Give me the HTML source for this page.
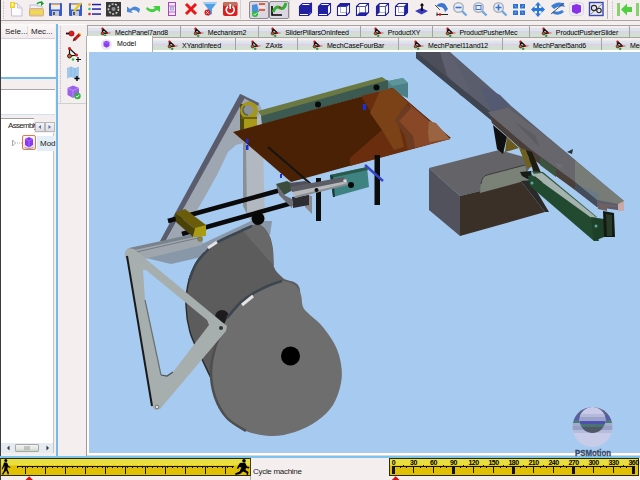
<!DOCTYPE html>
<html><head><meta charset="utf-8">
<style>
*{margin:0;padding:0;box-sizing:border-box}
html,body{width:640px;height:480px;overflow:hidden;background:#f5eeee;font-family:"Liberation Sans",sans-serif;font-size:7px;color:#000}
.a{position:absolute}
.tab{position:absolute;height:12px;border:1px solid #a4a4a4;border-bottom:none;background:linear-gradient(#f6eeee 0,#f6eeee 20%,#dce4ec 22%,#dce4ec 45%,#dcd4e6 47%,#dcd4e6 66%,#d2e0d2 68%,#d2e0d2 100%);white-space:nowrap;overflow:hidden}
.tab span{position:absolute;top:2px;font-size:7px;color:#111}
.tab i{position:absolute;top:1px;width:11px;height:11px}
.tc{position:absolute;left:0;right:0;top:0;bottom:0;display:flex;align-items:center;justify-content:center}
.tc span{position:relative;top:1px;margin-left:3px;font-size:7px;color:#000;letter-spacing:-0.1px}
.mi{flex:none;position:relative;top:1px}
.lbl{position:absolute;white-space:nowrap}
</style></head><body>


<!-- top toolbar -->
<div class="a" style="left:0;top:0;width:640px;height:21px;background:#f5eeee;border-bottom:1px solid #a9a5a5"></div>
<div class="a" style="left:0;top:0;width:1px;height:480px;background:#3c3c3c"></div>
<!-- left panel -->
<div class="a" style="left:1px;top:24px;width:54px;height:14px;background:linear-gradient(#fbf8f8,#f3ecec)"></div>
<div class="a" style="left:1px;top:38px;width:54px;height:1px;background:#d8d0e0"></div>
<div class="a" style="left:27px;top:26px;width:1px;height:11px;background:#e0dbe6"></div>
<div class="lbl" style="left:5px;top:27px;font-size:8px;color:#222">Sele...</div>
<div class="lbl" style="left:31px;top:27px;font-size:8px;color:#222">Mec...</div>
<div class="a" style="left:1px;top:39px;width:54px;height:38px;background:#fff"></div>
<div class="a" style="left:1px;top:77px;width:55px;height:2px;background:#74bbe9"></div>
<div class="a" style="left:1px;top:89px;width:54px;height:1px;background:#a8a8a8"></div>
<div class="a" style="left:1px;top:90px;width:54px;height:24px;background:#fff"></div>
<div class="a" style="left:1px;top:114px;width:54px;height:1px;background:#cfe0ee"></div>
<!-- assembly tab area -->
<div class="a" style="left:1px;top:118px;width:33px;height:16px;background:#fff;border-top:1px solid #a0a0a0"></div>
<div class="lbl" style="left:8px;top:121px;font-size:8px;color:#222;letter-spacing:-0.7px">Assembly</div>
<div class="a" style="left:35px;top:122px;width:10px;height:10px;border:1px solid #b8b8b8;background:linear-gradient(#f4f4f6,#dcdce4)"></div>
<div class="a" style="left:45px;top:122px;width:10px;height:10px;border:1px solid #b8b8b8;background:linear-gradient(#f4f4f6,#dcdce4)"></div>
<div class="a" style="left:1px;top:133px;width:53px;height:320px;background:#fff;border-right:1px solid #c4c4c4"></div>
<div class="a" style="left:1px;top:443px;width:52px;height:10px;background:#e4ecf2"></div>
<div class="a" style="left:15px;top:444px;width:24px;height:8px;border:1px solid #a8a8a8;border-radius:1px;background:linear-gradient(#f2f2f2,#e0e8e0 60%,#c8d4c8)"></div>
<svg class="a" style="left:0;top:440px" width="56" height="15" viewBox="0 440 56 15">
<path d="M9.5 445.5 L7 448 L9.5 450.5 Z" fill="#333"/>
<path d="M46.5 445.5 L49 448 L46.5 450.5 Z" fill="#333"/>
<path d="M25 446 V450 M27 446 V450 M29 446 V450" stroke="#888" stroke-width=".8"/>
</svg>
<!-- row selection -->
<div class="a" style="left:37px;top:136px;width:17px;height:15px;background:#e4eef6"></div>
<div class="a" style="left:22px;top:135px;width:14px;height:15px;border:1px solid #e07848;border-radius:2px;background:linear-gradient(#f8f8fc,#e4e4ec)"></div>
<svg class="a" style="left:0;top:120px" width="56" height="35" viewBox="0 120 56 35">
<path d="M12.5 140 L15.5 143 L12.5 146 Z" fill="none" stroke="#a0a0a8" stroke-width=".9"/>
<path d="M17 143 H22" stroke="#b0b0b0" stroke-width="1" stroke-dasharray="1 1"/>
<path d="M25 139 L29 137 L33 139 V145 L29 147.5 L25 145 Z" fill="#8a38f0"/>
<path d="M25 139 L29 141 L33 139 M29 141 V147.5" fill="none" stroke="#b088ff" stroke-width=".6"/>
<path d="M24.5 147.5 Q29 150 33.5 147.5" fill="none" stroke="#a0a0a8" stroke-width="1"/>
<path d="M41 125 L38.5 127 L41 129 Z" fill="#5870b0"/>
<path d="M48.5 125 L51 127 L48.5 129 Z" fill="#5870b0"/>
</svg>
<div class="lbl" style="left:40px;top:139px;font-size:8px;color:#222">Mod</div>
<!-- blue splitter -->
<div class="a" style="left:56px;top:24px;width:2px;height:433px;background:#74bbe9"></div><div class="a" style="left:58px;top:24px;width:28px;height:1px;background:#fff"></div>
<!-- vertical toolbar -->
<div class="a" style="left:58px;top:103px;width:28px;height:1px;background:#c8d4cc"></div>
<div class="a" style="left:86px;top:36px;width:1px;height:420px;background:#9c9c9c"></div>
<!-- viewport frame -->
<div class="a" style="left:87px;top:50px;width:553px;height:406px;background:#fff"></div>
<div class="a" style="left:89px;top:52px;width:551px;height:401px;background:#a6caf0"></div>
<div class="a" style="left:87px;top:455px;width:553px;height:1px;background:#ddd6d6"></div>
<div class="a" style="left:0;top:456px;width:640px;height:2px;background:#7cc4ee"></div>
<!-- timeline -->
<div class="a" style="left:1px;top:458px;width:250px;height:18px;background:linear-gradient(#e8de40 0,#e8de40 40%,#e0c000 41%,#e0c000 100%);border-top:1px solid #2a2a10;border-bottom:1px solid #2a2a10;border-right:1px solid #404020"></div>
<div class="a" style="left:389px;top:458px;width:250px;height:18px;background:linear-gradient(#e8de40 0,#e8de40 40%,#e0c000 41%,#e0c000 100%);border:1px solid #2a2a10"></div>
<div class="a" style="left:251px;top:458px;width:138px;height:22px;background:#f5eeee"></div>
<div class="lbl" style="left:253px;top:467px;font-size:8px;color:#1a1a1a;letter-spacing:-0.3px">Cycle machine</div>
<div class="a" style="left:1px;top:476px;width:639px;height:4px;background:#f5eeee"></div>
<div class="a" style="left:250px;top:476px;width:1px;height:4px;background:#b0b0b0"></div>


<div class="tab" style="left:87px;top:25px;width:94px;height:12px"><div class="tc"><svg class="mi" width="12" height="11" viewBox="0 0 12 11"><path d="M2.5 1.5 L2.5 6.5 L7.5 6 Z" fill="none" stroke="#111" stroke-width="1.4" stroke-linejoin="round"/><circle cx="2.5" cy="1.6" r="1.1" fill="#e81010"/><circle cx="2.6" cy="6.4" r="1.5" fill="#c85a18" stroke="#222" stroke-width=".6"/><circle cx="7.5" cy="6" r="1.1" fill="#f01010"/><circle cx="5.2" cy="8.8" r="1" fill="#30c030" stroke="#143" stroke-width=".4"/><path d="M9 6 H10.5" stroke="#666" stroke-width=".8"/></svg><span>MechPanel7and8</span></div></div>
<div class="tab" style="left:180px;top:25px;width:79px;height:12px"><div class="tc"><svg class="mi" width="12" height="11" viewBox="0 0 12 11"><path d="M2.5 1.5 L2.5 6.5 L7.5 6 Z" fill="none" stroke="#111" stroke-width="1.4" stroke-linejoin="round"/><circle cx="2.5" cy="1.6" r="1.1" fill="#e81010"/><circle cx="2.6" cy="6.4" r="1.5" fill="#c85a18" stroke="#222" stroke-width=".6"/><circle cx="7.5" cy="6" r="1.1" fill="#f01010"/><circle cx="5.2" cy="8.8" r="1" fill="#30c030" stroke="#143" stroke-width=".4"/><path d="M9 6 H10.5" stroke="#666" stroke-width=".8"/></svg><span>Mechanism2</span></div></div>
<div class="tab" style="left:258px;top:25px;width:103px;height:12px"><div class="tc"><svg class="mi" width="12" height="11" viewBox="0 0 12 11"><path d="M2.5 1.5 L2.5 6.5 L7.5 6 Z" fill="none" stroke="#111" stroke-width="1.4" stroke-linejoin="round"/><circle cx="2.5" cy="1.6" r="1.1" fill="#e81010"/><circle cx="2.6" cy="6.4" r="1.5" fill="#c85a18" stroke="#222" stroke-width=".6"/><circle cx="7.5" cy="6" r="1.1" fill="#f01010"/><circle cx="5.2" cy="8.8" r="1" fill="#30c030" stroke="#143" stroke-width=".4"/><path d="M9 6 H10.5" stroke="#666" stroke-width=".8"/></svg><span>SliderPillarsOnInfeed</span></div></div>
<div class="tab" style="left:360px;top:25px;width:73px;height:12px"><div class="tc"><svg class="mi" width="12" height="11" viewBox="0 0 12 11"><path d="M2.5 1.5 L2.5 6.5 L7.5 6 Z" fill="none" stroke="#111" stroke-width="1.4" stroke-linejoin="round"/><circle cx="2.5" cy="1.6" r="1.1" fill="#e81010"/><circle cx="2.6" cy="6.4" r="1.5" fill="#c85a18" stroke="#222" stroke-width=".6"/><circle cx="7.5" cy="6" r="1.1" fill="#f01010"/><circle cx="5.2" cy="8.8" r="1" fill="#30c030" stroke="#143" stroke-width=".4"/><path d="M9 6 H10.5" stroke="#666" stroke-width=".8"/></svg><span>ProductXY</span></div></div>
<div class="tab" style="left:432px;top:25px;width:98px;height:12px"><div class="tc"><svg class="mi" width="12" height="11" viewBox="0 0 12 11"><path d="M2.5 1.5 L2.5 6.5 L7.5 6 Z" fill="none" stroke="#111" stroke-width="1.4" stroke-linejoin="round"/><circle cx="2.5" cy="1.6" r="1.1" fill="#e81010"/><circle cx="2.6" cy="6.4" r="1.5" fill="#c85a18" stroke="#222" stroke-width=".6"/><circle cx="7.5" cy="6" r="1.1" fill="#f01010"/><circle cx="5.2" cy="8.8" r="1" fill="#30c030" stroke="#143" stroke-width=".4"/><path d="M9 6 H10.5" stroke="#666" stroke-width=".8"/></svg><span>ProductPusherMec</span></div></div>
<div class="tab" style="left:529px;top:25px;width:101px;height:12px"><div class="tc"><svg class="mi" width="12" height="11" viewBox="0 0 12 11"><path d="M2.5 1.5 L2.5 6.5 L7.5 6 Z" fill="none" stroke="#111" stroke-width="1.4" stroke-linejoin="round"/><circle cx="2.5" cy="1.6" r="1.1" fill="#e81010"/><circle cx="2.6" cy="6.4" r="1.5" fill="#c85a18" stroke="#222" stroke-width=".6"/><circle cx="7.5" cy="6" r="1.1" fill="#f01010"/><circle cx="5.2" cy="8.8" r="1" fill="#30c030" stroke="#143" stroke-width=".4"/><path d="M9 6 H10.5" stroke="#666" stroke-width=".8"/></svg><span>ProductPusherSlider</span></div></div>
<div class="tab" style="left:629px;top:25px;width:102px;height:12px"><div class="tc"><svg class="mi" width="12" height="11" viewBox="0 0 12 11"><path d="M2.5 1.5 L2.5 6.5 L7.5 6 Z" fill="none" stroke="#111" stroke-width="1.4" stroke-linejoin="round"/><circle cx="2.5" cy="1.6" r="1.1" fill="#e81010"/><circle cx="2.6" cy="6.4" r="1.5" fill="#c85a18" stroke="#222" stroke-width=".6"/><circle cx="7.5" cy="6" r="1.1" fill="#f01010"/><circle cx="5.2" cy="8.8" r="1" fill="#30c030" stroke="#143" stroke-width=".4"/><path d="M9 6 H10.5" stroke="#666" stroke-width=".8"/></svg><span>MechPanel3and4</span></div></div>
<div class="tab t2" style="left:152px;top:37px;width:84px;height:13px"><div class="tc"><svg class="mi" width="12" height="11" viewBox="0 0 12 11"><path d="M2.5 1.5 L2.5 6.5 L7.5 6 Z" fill="none" stroke="#111" stroke-width="1.4" stroke-linejoin="round"/><circle cx="2.5" cy="1.6" r="1.1" fill="#e81010"/><circle cx="2.6" cy="6.4" r="1.5" fill="#c85a18" stroke="#222" stroke-width=".6"/><circle cx="7.5" cy="6" r="1.1" fill="#f01010"/><circle cx="5.2" cy="8.8" r="1" fill="#30c030" stroke="#143" stroke-width=".4"/><path d="M9 6 H10.5" stroke="#666" stroke-width=".8"/></svg><span>XYandInfeed</span></div></div>
<div class="tab t2" style="left:235px;top:37px;width:63px;height:13px"><div class="tc"><svg class="mi" width="12" height="11" viewBox="0 0 12 11"><path d="M2.5 1.5 L2.5 6.5 L7.5 6 Z" fill="none" stroke="#111" stroke-width="1.4" stroke-linejoin="round"/><circle cx="2.5" cy="1.6" r="1.1" fill="#e81010"/><circle cx="2.6" cy="6.4" r="1.5" fill="#c85a18" stroke="#222" stroke-width=".6"/><circle cx="7.5" cy="6" r="1.1" fill="#f01010"/><circle cx="5.2" cy="8.8" r="1" fill="#30c030" stroke="#143" stroke-width=".4"/><path d="M9 6 H10.5" stroke="#666" stroke-width=".8"/></svg><span>ZAxis</span></div></div>
<div class="tab t2" style="left:297px;top:37px;width:102px;height:13px"><div class="tc"><svg class="mi" width="12" height="11" viewBox="0 0 12 11"><path d="M2.5 1.5 L2.5 6.5 L7.5 6 Z" fill="none" stroke="#111" stroke-width="1.4" stroke-linejoin="round"/><circle cx="2.5" cy="1.6" r="1.1" fill="#e81010"/><circle cx="2.6" cy="6.4" r="1.5" fill="#c85a18" stroke="#222" stroke-width=".6"/><circle cx="7.5" cy="6" r="1.1" fill="#f01010"/><circle cx="5.2" cy="8.8" r="1" fill="#30c030" stroke="#143" stroke-width=".4"/><path d="M9 6 H10.5" stroke="#666" stroke-width=".8"/></svg><span>MechCaseFourBar</span></div></div>
<div class="tab t2" style="left:398px;top:37px;width:105px;height:13px"><div class="tc"><svg class="mi" width="12" height="11" viewBox="0 0 12 11"><path d="M2.5 1.5 L2.5 6.5 L7.5 6 Z" fill="none" stroke="#111" stroke-width="1.4" stroke-linejoin="round"/><circle cx="2.5" cy="1.6" r="1.1" fill="#e81010"/><circle cx="2.6" cy="6.4" r="1.5" fill="#c85a18" stroke="#222" stroke-width=".6"/><circle cx="7.5" cy="6" r="1.1" fill="#f01010"/><circle cx="5.2" cy="8.8" r="1" fill="#30c030" stroke="#143" stroke-width=".4"/><path d="M9 6 H10.5" stroke="#666" stroke-width=".8"/></svg><span>MechPanel11and12</span></div></div>
<div class="tab t2" style="left:502px;top:37px;width:100px;height:13px"><div class="tc"><svg class="mi" width="12" height="11" viewBox="0 0 12 11"><path d="M2.5 1.5 L2.5 6.5 L7.5 6 Z" fill="none" stroke="#111" stroke-width="1.4" stroke-linejoin="round"/><circle cx="2.5" cy="1.6" r="1.1" fill="#e81010"/><circle cx="2.6" cy="6.4" r="1.5" fill="#c85a18" stroke="#222" stroke-width=".6"/><circle cx="7.5" cy="6" r="1.1" fill="#f01010"/><circle cx="5.2" cy="8.8" r="1" fill="#30c030" stroke="#143" stroke-width=".4"/><path d="M9 6 H10.5" stroke="#666" stroke-width=".8"/></svg><span>MechPanel5and6</span></div></div>
<div class="tab t2" style="left:601px;top:37px;width:100px;height:13px"><div class="tc"><svg class="mi" width="12" height="11" viewBox="0 0 12 11"><path d="M2.5 1.5 L2.5 6.5 L7.5 6 Z" fill="none" stroke="#111" stroke-width="1.4" stroke-linejoin="round"/><circle cx="2.5" cy="1.6" r="1.1" fill="#e81010"/><circle cx="2.6" cy="6.4" r="1.5" fill="#c85a18" stroke="#222" stroke-width=".6"/><circle cx="7.5" cy="6" r="1.1" fill="#f01010"/><circle cx="5.2" cy="8.8" r="1" fill="#30c030" stroke="#143" stroke-width=".4"/><path d="M9 6 H10.5" stroke="#666" stroke-width=".8"/></svg><span>MechPanel9and10</span></div></div>
<div class="a" style="left:86px;top:36px;width:67px;height:16px;background:#fff;border-left:1px solid #b0b0b0;border-right:1px solid #b0b0b0"></div>
<div class="a" style="left:101px;top:39px;width:11px;height:11px;border-radius:50%;background:radial-gradient(#f0ecf4 40%,#e8e4ee 70%,#fff)"></div>
<svg class="a" style="left:101px;top:39px" width="11" height="11" viewBox="0 0 11 11"><path d="M2.5 3 L5.5 1.8 L8.5 3 L8.5 7 L5.5 8.8 L2.5 7 Z" fill="#8a3cf0"/><path d="M2.5 3 L5.5 4.2 L8.5 3" fill="none" stroke="#b080ff" stroke-width=".6"/></svg>
<div class="lbl" style="left:117px;top:40px;font-size:7px;color:#000">Model</div>
<svg class="a" style="left:0;top:0" width="640" height="480" viewBox="0 0 640 480">
<defs><clipPath id="vpc"><rect x="89" y="52" width="551" height="401"/></clipPath>
<clipPath id="ps1"><circle cx="592.5" cy="427" r="20"/></clipPath>
<clipPath id="ps2"><circle cx="592.5" cy="420" r="13"/></clipPath>
</defs>
<g clip-path="url(#vpc)">
<!-- ===== dark box ===== -->
<polygon points="429,168 499,150 535,160 521,181 460,196" fill="#646468"/>
<polygon points="429,168 460,196 460,236 429,210" fill="#52525c"/>
<polygon points="460,196 521,181 545,212 460,236" fill="#3a3028"/>
<path d="M480,193 L481,182 Q482,176 487,175 L525,165 L528,180 Z" fill="#7a8278"/>
<path d="M481,184 Q482,176 487,175 L525,165" fill="none" stroke="#3a3a3e" stroke-width="1"/>
<polygon points="521,181 530,180 549,212 545,212" fill="#2a2a28"/>
<!-- ===== conveyor beam ===== -->
<polygon points="416,52 450,52 510,105 550,139 600,181 624,201 624,211 597,207 492,123 491,120 416,58" fill="#5a5d6c"/>
<polygon points="416,52 440,52 447,75 460,95 492,113" fill="#4c4e5a"/>
<polygon points="447,52 454,58 470,90 465,92 447,75 440,52" fill="#5e6070"/>
<polygon points="480,85 500,95 510,105 492,113" fill="#545a72"/>
<polygon points="416,52 492,113 491,120 416,58" fill="#3e4450"/>
<polygon points="488,112 508,108 550,139 575,160 575,182 530,149 491,116" fill="#66666c"/>
<polygon points="515,122 535,135 540,148" fill="#5c5c62"/>
<polygon points="555,163 563,165 560,169" fill="#707074"/>
<polygon points="491,116 530,149 575,182 575,190 530,157 492,123" fill="#4a3e38"/>
<polygon points="540,157 556,169 556,177 540,165" fill="#3a5440"/>
<polygon points="575,160 600,181 624,201 624,205 597,200 575,182" fill="#787c76"/>
<polygon points="580,186 600,194 597,200" fill="#6a7a84"/>
<polygon points="575,182 597,200 597,207 575,190" fill="#444c5c"/>
<polygon points="567,152 573,149 572,154" fill="#303030"/>
<polygon points="597,203 616,205 624,201 624,211 618,211 618,207 607,207 607,211 598,209" fill="#6e6060"/>
<polygon points="618,204 624,201 624,211 618,211" fill="#c8a8a8"/>
<!-- brackets under beam -->
<polygon points="493,125 507,137 503,154 497,149" fill="#101010"/>
<polygon points="507,137 519,148 505,152" fill="#6a5a1e"/>
<polygon points="519,148 526,150 532,167 527,168" fill="#6e6020"/>
<polygon points="526,150 532,152 545,182 536,183 532,167" fill="#201c10"/>
<!-- ===== green slider ===== -->
<polygon points="520,172 531,171 533,182 522,176" fill="#181c18"/>
<polygon points="531,171 543,172 597,217 590,219" fill="#2e5a40"/>
<polygon points="532,174 542,173 596,217 589,219" fill="#a6b2ae"/>
<polygon points="528,176 532,175 593,219 599,241 594,241 530,186" fill="#214a30"/>
<polygon points="591,217 604,219 604,237 594,241" fill="#1e4028"/>
<polygon points="603,211 614,213 615,237 604,237" fill="#121a12"/>
<polygon points="606,214 612,215 612,236 607,236" fill="#2a3a2a"/>
<circle cx="532" cy="183" r="1.5" fill="#5aa8a0"/>
<circle cx="596" cy="226" r="1.5" fill="#5aa8a0"/>
<!-- ===== upper frame ===== -->
<polygon points="243,143 262,110 265,224 252,224 246,212 243,200" fill="#b2b8c0"/>
<polygon points="243,143 246,142 247,214 243,206" fill="#8a9096"/>
<polygon points="244,97 259,103 262,110 243,143 236,145 228,152 217,175 203,200 180,240 166,241" fill="#9ea6b2"/>
<polygon points="240,94 245.5,96.5 165.5,241 160,241" fill="#5a5c6c"/>
<polygon points="240,94 259,103 258,106 244,98" fill="#5c5e6e"/>
<!-- bracket -->
<rect x="240" y="116" width="17" height="14" fill="#a89a18"/>
<rect x="240" y="104" width="4" height="26" fill="#4e4810"/>
<circle cx="249" cy="110.5" r="9" fill="#a49616"/>
<circle cx="248.5" cy="110" r="5" fill="#8a9298"/>
<path d="M245 106 a5 5 0 0 0 3 9" fill="none" stroke="#5a6068" stroke-width="1.5"/>
<rect x="241" y="117" width="16" height="2" fill="#6a6010"/>
<!-- green bar -->
<polygon points="258,111 382,77 388,81 262,117" fill="#6a7842"/>
<polygon points="261,116 388,80 388,89 262,125" fill="#3c5a52"/>
<polygon points="388,81 403,78 408,83 408,98 388,90" fill="#4c8088"/>
<polygon points="388,81 403,78 408,83 392,86" fill="#5e949a"/>
<circle cx="318" cy="104.5" r="3" fill="#0a0a0a"/>
<circle cx="376.5" cy="87.5" r="3" fill="#0a0a0a"/>
<!-- ===== brown plate ===== -->
<polygon points="233,132 392,88 451,138 291,182" fill="#4a2104"/>
<polygon points="361,96 393,88 450,139 350,166 350,158 382,130" fill="#6a2e0e"/>
<polygon points="380,91 393,88 408,103 397,118 404,147 394,150 382,130 370,113" fill="#7a4216"/>
<polygon points="406,104 411,108 399,121 413,136 415,148 408,150 405,136 395,120" fill="#6c3c22"/>
<polygon points="408,103 450,139 415,148 413,136 399,121 411,108" fill="#884828"/>
<polygon points="429,121 436,123 450,139 429,142 428,131" fill="#9a6442"/>
<line x1="268" y1="147" x2="312" y2="185" stroke="#141414" stroke-width="2"/>
<rect x="246" y="139" width="2.5" height="4" fill="#1830e0"/>
<rect x="246" y="145" width="2.5" height="5" fill="#1830e0"/>
<rect x="363" y="104" width="3" height="6" fill="#1830e0"/>
<rect x="280" y="174" width="2" height="4" fill="#1830e0"/>
<!-- posts -->
<rect x="316" y="178" width="5" height="43" fill="#0c0c0c"/>
<rect x="374.5" y="155" width="5.5" height="50" fill="#0c0c0c"/>
<!-- teal block 2 -->
<polygon points="330,175 367,167 369,187 333,197" fill="#3e8282"/>
<polygon points="330,175 367,167 368,170 331,178" fill="#2a5a4a"/>
<polygon points="330,175 333,176 335,197 333,197" fill="#1a3a3a"/>
<circle cx="351" cy="185" r="3" fill="#080808"/>
<line x1="365" y1="165" x2="383" y2="181" stroke="#3446c8" stroke-width="2.5"/>
<!-- ===== cams ===== -->
<polygon points="146,258 204,243 251,221 272,221 270,235 241,235 221,247 206,256 171,264" fill="#8898a8"/>
<path d="M189,280 C190.7,273.0 193.5,267.5 196,263 C198.5,258.5 200.7,256.5 204,253 C207.3,249.5 209.8,245.8 216,242 C222.2,238.2 235.0,232.8 241,230 C247.0,227.2 248.5,225.7 252,225 C255.5,224.3 259.0,224.0 262,226 C265.0,228.0 268.2,233.0 270,237 C271.8,241.0 272.3,245.0 273,250 C273.7,255.0 272.3,262.3 274,267 C275.7,271.7 278.7,274.2 283,278 C287.3,281.8 298.8,279.7 300,290 C301.2,300.3 300.0,318.3 290,340 C280.0,361.7 253.0,413.3 240,420 C227.0,426.7 218.7,390.8 212,380 C205.3,369.2 203.7,363.0 200,355 C196.3,347.0 192.3,340.3 190,332 C187.7,323.7 186.2,313.7 186,305 C185.8,296.3 187.3,287.0 189,280Z" fill="#5c5c5c"/>
<polygon points="241,229 252,225 262,226 270,237 273,250 274,266" fill="#686868"/>
<path d="M204,253 C202.7,254.7 198.5,258.5 196,263 C193.5,267.5 190.7,273.0 189,280 C187.3,287.0 185.8,296.3 186,305 C186.2,313.7 187.7,323.7 190,332 C192.3,340.3 196.3,347.0 200,355 C203.7,363.0 210.0,375.8 212,380" fill="none" stroke="#2e2e2e" stroke-width="1.5"/>
<path d="M189,281 C190.2,278.2 193.5,268.5 196,264 C198.5,259.5 200.7,257.5 204,254 C207.3,250.5 209.8,246.8 216,243 C222.2,239.2 235.0,233.8 241,231 C247.0,228.2 250.2,226.8 252,226" fill="none" stroke="#3c4650" stroke-width="2.5"/>
<line x1="208" y1="248" x2="217" y2="242" stroke="#e4e4e4" stroke-width="3"/>
<circle cx="222" cy="317" r="7" fill="#1c1c1c"/>
<path d="M227,318 C230.0,313.2 235.8,307.0 240,303 C244.2,299.0 247.0,297.0 252,294 C257.0,291.0 265.0,287.2 270,285 C275.0,282.8 277.8,281.0 282,281 C286.2,281.0 291.8,282.7 295,285 C298.2,287.3 299.7,291.3 301,295 C302.3,298.7 301.5,303.7 303,307 C304.5,310.3 306.8,311.8 310,315 C313.2,318.2 317.8,321.0 322,326 C326.2,331.0 331.8,338.7 335,345 C338.2,351.3 340.0,357.7 341,364 C342.0,370.3 342.3,376.2 341,383 C339.7,389.8 337.0,398.7 333,405 C329.0,411.3 323.3,416.5 317,421 C310.7,425.5 302.7,429.5 295,432 C287.3,434.5 279.2,436.2 271,436 C262.8,435.8 253.3,434.0 246,431 C238.7,428.0 232.2,423.7 227,418 C221.8,412.3 217.7,404.7 215,397 C212.3,389.3 211.0,380.2 211,372 C211.0,363.8 213.2,354.7 215,348 C216.8,341.3 220.0,337.0 222,332 C224.0,327.0 224.0,322.8 227,318Z" fill="#6e6e6e"/>
<path d="M222,332 C220.8,334.7 216.8,341.3 215,348 C213.2,354.7 211.0,363.8 211,372 C211.0,380.2 212.3,389.3 215,397 C217.7,404.7 221.8,412.3 227,418 C232.2,423.7 242.8,428.8 246,431" fill="none" stroke="#4e4e4e" stroke-width="2.5"/>
<path d="M227,318 C229.2,315.5 235.8,307.0 240,303 C244.2,299.0 247.0,297.0 252,294 C257.0,291.0 265.0,287.2 270,285 C275.0,282.8 280.0,281.7 282,281" fill="none" stroke="#3c4650" stroke-width="2.5"/>
<line x1="242" y1="305" x2="253" y2="296" stroke="#e4e4e4" stroke-width="3"/>
<circle cx="290.5" cy="356" r="9.5" fill="#000"/>
<!-- ===== link arm / base ===== -->
<path d="M129,249 L198,234 Q204,235 203,241 L202,245 L132,262 Q125,262 125,255 Q125,250 129,249 Z" fill="#a0a6ae"/>
<path d="M129,248 L198,233 L199,236 L130,251 Z" fill="#7a828c"/><path d="M132,253 L198,238" stroke="#6a7078" stroke-width=".8"/>
<circle cx="130" cy="256" r="2.3" fill="#e4e8ea" stroke="#555" stroke-width=".6"/>
<circle cx="200" cy="239" r="2.3" fill="#8a8a30" stroke="#555" stroke-width=".5"/>
<!-- lower triangle frame -->
<path d="M125,252 L128,248 L134,249 L147,260 L222,322 L227,326 L226,331 L160,409 L155,410 L152,406 L127,257 Z M143,270 L146,270 L207,320 L209,325 L173,372 L167,376 L161,375 L145,300 Z" fill="#a6aeae" fill-rule="evenodd"/>
<path d="M127,256 L152,406" stroke="#1a1a1a" stroke-width="2"/>
<path d="M145,300 L161,375" stroke="#6a7070" stroke-width="1.2"/>
<path d="M161,375 L167,376 L173,372" fill="none" stroke="#4a5050" stroke-width="1.2"/>
<circle cx="221" cy="328" r="2" fill="#333"/>
<circle cx="157" cy="407" r="1.8" fill="#e0e0e0" stroke="#444" stroke-width=".6"/>
<!-- rods -->
<line x1="168" y1="221" x2="279" y2="190.5" stroke="#0a0a0a" stroke-width="4.6"/>
<line x1="182" y1="234" x2="292" y2="203" stroke="#0a0a0a" stroke-width="4.6"/>
<circle cx="258" cy="218.5" r="6.5" fill="#080808"/>
<!-- yellow block -->
<polygon points="175,213 185,209 206,225 195,229" fill="#6a5c0a"/>
<polygon points="175,213 195,229 193,237 176,222" fill="#4a4206"/>
<polygon points="195,228 206,225 206,236 193,237" fill="#aa9c12"/>
<!-- slider -->
<polygon points="305,195 312,196 312,214 305,207" fill="#8a8a90"/>
<polygon points="276,184 287,181 297,186 291,191 284,195" fill="#3c4c3c"/>
<polygon points="289,183 305,181 312,184 295,192" fill="#50505a"/>
<polygon points="276,184 284,195 292,199 292,208 279,195" fill="#6c6c72"/>
<polygon points="292,197 309,195 309,205 293,208" fill="#2e2e32"/>
<polygon points="291,189 345,178 348,184 295,198" fill="#b6b8bc"/>
<polygon points="290,187 344,177 347,181 292,192" fill="#5c5c64"/>
<polygon points="295,196 348,183 348,185 295,198" fill="#8a8e92"/>
<circle cx="316.5" cy="190" r="2" fill="#0c0c0c"/>
<circle cx="345" cy="181" r="2" fill="#d8d8d8" stroke="#777" stroke-width=".5"/>
<!-- ===== PSMotion logo ===== -->
<g clip-path="url(#ps1)">
<rect x="570" y="405" width="46" height="45" fill="#c8cce8"/>
<rect x="570" y="405" width="46" height="12" fill="#58608c"/>
<rect x="570" y="417" width="46" height="3" fill="#5a5ab0"/>
<rect x="570" y="420" width="46" height="3" fill="#4a7a7a"/>
<rect x="570" y="423" width="46" height="3" fill="#a4accc"/>
<rect x="570" y="426" width="46" height="4" fill="#98a0c8"/>
<rect x="570" y="430" width="46" height="3" fill="#b4bcdc"/>
</g>
<g clip-path="url(#ps2)">
<rect x="578" y="405" width="30" height="30" fill="#c8cae8"/>
<rect x="578" y="414" width="30" height="3" fill="#b4b8dc"/>
<rect x="578" y="417" width="30" height="4" fill="#9aa4c8"/>
<rect x="578" y="421" width="30" height="3" fill="#5050b0"/>
<rect x="578" y="424" width="30" height="3" fill="#4a7474"/>
<rect x="578" y="427" width="30" height="7" fill="#505868"/>
</g>
</g>
<text x="575" y="456" font-family="Liberation Sans" font-weight="bold" font-size="9.5" fill="#34486a" stroke="#34486a" stroke-width="0.35" textLength="36" lengthAdjust="spacingAndGlyphs">PSMotion</text>
</svg>

<svg class="a" style="left:0;top:0" width="640" height="110" viewBox="0 0 640 110">
<defs>
<pattern id="grip" width="3" height="2.5" patternUnits="userSpaceOnUse"><rect x="0" y="0.5" width="1" height="1" fill="#a8a8b8"/></pattern>
<g id="cube"><path d="M1.5 4.5 L4.5 1.5 L13.5 1.5 L13.5 10.5 L10.5 13.5 L1.5 13.5 Z" fill="#fff" stroke="#2020a0" stroke-width="1.1"/><path d="M1.5 4.5 L10.5 4.5 L13.5 1.5 M10.5 4.5 L10.5 13.5" fill="none" stroke="#2020a0" stroke-width="1.1"/><rect x="4.5" y="4.5" width="6" height="6" fill="none" stroke="#8080c0" stroke-width=".6"/></g>
</defs>
<!-- grips -->
<rect x="3" y="1" width="2" height="18" fill="url(#grip)"/>
<rect x="244" y="1" width="2" height="18" fill="url(#grip)"/>
<rect x="292" y="1" width="2" height="18" fill="url(#grip)"/>
<rect x="611" y="1" width="2" height="18" fill="url(#grip)"/>
<rect x="240" y="0" width="1" height="19" fill="#d4d0d4"/>
<rect x="289" y="0" width="1" height="19" fill="#d4d0d4"/>
<rect x="607" y="0" width="1" height="19" fill="#b8b4b8"/>
<!-- new -->
<path d="M11.5 3.5 H17.5 L22 8 V16 H11.5 Z" fill="#fbfbff" stroke="#c4bcd8" stroke-width="1"/>
<path d="M17.5 3.5 V8 H22" fill="#e8e4f0" stroke="#c4bcd8" stroke-width=".8"/>
<rect x="10" y="2" width="5" height="6" fill="#f0d020"/>
<rect x="11.5" y="3" width="2" height="3.5" fill="#fff8a0"/>
<!-- open -->
<path d="M30 5 H36 L37 6 H42 V15.5 H30 Z" fill="#f4f0f8" stroke="#a8b4cc" stroke-width=".8"/>
<rect x="29.5" y="8.5" width="14" height="7.5" rx="1" fill="#e8c890" stroke="#d8a860" stroke-width=".8"/>
<rect x="30.5" y="11" width="12" height="2.5" fill="#f0e030"/>
<path d="M37 4 Q39 1.5 42.5 2.5" fill="none" stroke="#10a030" stroke-width="1.6"/>
<path d="M41 1 L44 3.5 L41 6 Z" fill="#10a030"/>
<!-- save -->
<rect x="49" y="3" width="13" height="13" rx="1" fill="#3a5cc8"/>
<rect x="51" y="3.5" width="9" height="6" fill="#e8ecf4"/>
<rect x="51" y="4" width="9" height="1" fill="#f0a030"/>
<rect x="52" y="11" width="7" height="5" fill="#c8c8d0"/>
<rect x="53" y="12" width="2" height="3" fill="#406070"/>
<!-- save as -->
<rect x="69" y="3" width="13" height="13" rx="1" fill="#3a5cc8"/>
<rect x="71" y="3.5" width="9" height="6" fill="#e8ecf4"/>
<rect x="71" y="4" width="9" height="1" fill="#f0a030"/>
<rect x="72" y="11" width="7" height="5" fill="#c8c8d0"/>
<rect x="73" y="12" width="2" height="3" fill="#406070"/>
<path d="M74 11 L81 3" stroke="#e8c820" stroke-width="2.2"/>
<!-- list -->
<circle cx="89.5" cy="4.5" r="1.3" fill="#f0a020"/>
<circle cx="89.5" cy="9" r="1.3" fill="#30c080"/>
<circle cx="89.5" cy="14" r="1.3" fill="#e02020"/>
<rect x="92" y="3.8" width="9" height="1.5" fill="#2020b0"/>
<rect x="92" y="8.3" width="9" height="1.5" fill="#2020b0"/>
<rect x="92" y="13.3" width="9" height="1.5" fill="#2020b0"/>
<!-- gear-ish -->
<rect x="106" y="2" width="15" height="14.5" fill="#383838"/>
<circle cx="113.5" cy="9" r="5" fill="none" stroke="#d0d0d0" stroke-width="1.6" stroke-dasharray="2 1.5"/>
<circle cx="113.5" cy="9" r="2" fill="#909090"/>
<!-- undo -->
<path d="M127 12 V6.5 L130 9 Q135 4 140 9 L139 13 Q135 8 131 11 L133 13 Z" fill="#4a88d8"/>
<!-- redo -->
<path d="M160 6 V12 L157 10 Q151 15 146 9 L147 7 Q152 11 155 8 L153 6 Z" fill="#40d040"/>
<!-- purple frame -->
<rect x="168.5" y="2.5" width="7" height="13" fill="#f4eef8" stroke="#b040c0" stroke-width="1"/>
<path d="M168.5 6 H175.5 M168.5 12 H175.5" stroke="#b040c0" stroke-width=".8"/>
<rect x="170.5" y="7" width="3" height="3" fill="#c0d0f0" stroke="#7080c0" stroke-width=".5"/>
<!-- red x -->
<path d="M186 4 L196 14 M196 4 L186 14" stroke="#e81818" stroke-width="3"/>
<!-- funnel -->
<path d="M203 2.5 H217 L212 9 V14 L208 16 V9 Z" fill="#50a0e8"/>
<path d="M204 3.5 H216" stroke="#a0d0f8" stroke-width="1"/>
<circle cx="207.5" cy="12.5" r="3" fill="#d02020"/>
<path d="M206.3 11.3 L208.7 13.7 M208.7 11.3 L206.3 13.7" stroke="#fff" stroke-width=".8"/>
<!-- power -->
<rect x="223" y="2" width="14.5" height="14" rx="2" fill="#d82020"/>
<rect x="223" y="2" width="14.5" height="4" rx="2" fill="#c07060"/>
<path d="M228 6.5 A4 4 0 1 0 232.5 6.5" fill="none" stroke="#fff" stroke-width="1.6"/>
<path d="M230.2 4 V9" stroke="#fff" stroke-width="1.6"/>
<!-- pressed buttons -->
<rect x="249.5" y="1.5" width="19" height="17" rx="1.5" fill="#dcd6e2" stroke="#8c8c90" stroke-width="1"/>
<rect x="269.5" y="1.5" width="19" height="17" rx="1.5" fill="#dcd6e2" stroke="#8c8c90" stroke-width="1"/>
<path d="M252 5 L257 4 L259 12 L252 12 Z" fill="#4a90e0"/>
<rect x="259" y="3" width="6" height="2" fill="#e06040"/><rect x="259" y="6" width="6" height="2" fill="#e8e8f0"/><rect x="259" y="9" width="6" height="2" fill="#e06040"/>
<circle cx="255" cy="14" r="3" fill="#30b840"/>
<path d="M253.5 14 L254.7 15.2 L256.8 12.8" fill="none" stroke="#fff" stroke-width=".8"/>
<path d="M272 6 V15 H282" fill="none" stroke="#000" stroke-width="1.6"/>
<path d="M273 12 Q276 5 280 8 Q284 10 286 3" fill="none" stroke="#30b030" stroke-width="3"/>
<circle cx="280" cy="7.5" r="1" fill="#e02020"/>
<!-- cubes -->
<use href="#cube" x="298" y="2"/>
<path d="M300 5 H309 V14 H300 Z M309 5 L312 2 V11 L309 14" fill="#2020a0"/>
<use href="#cube" x="317" y="2"/>
<path d="M319 5 H328 V14 H319 Z" fill="#2020a0"/>
<use href="#cube" x="336" y="2"/>
<path d="M337.5 6.5 L340.5 3.5 H349.5 L346.5 6.5 Z" fill="#2020a0"/>
<use href="#cube" x="355" y="2"/>
<path d="M356.5 15.5 L359.5 12.5 H368.5 L365.5 15.5 Z" fill="#2020a0"/>
<use href="#cube" x="375" y="2"/>
<path d="M376.5 6.5 L379.5 3.5 V12.5 L376.5 15.5 Z" fill="#2020a0"/>
<use href="#cube" x="394" y="2"/>
<path d="M404.5 6.5 L407.5 3.5 V12.5 L404.5 15.5 Z" fill="#2020a0"/>
<!-- axis icon -->
<path d="M415 11 L421.5 8 L428 11 L421.5 14.5 Z" fill="#3838c0"/>
<path d="M422 11 V4.5" stroke="#000" stroke-width="1.6"/>
<path d="M419.8 5.5 L422 3 L424.2 5.5 Z" fill="#000"/>
<!-- rotation icon -->
<path d="M436 6 Q440 1 445 4 L448 9 L445 12 Q444 7 440 7 Z" fill="#3878d0"/>
<path d="M435 5 L440 10" stroke="#333" stroke-width=".8"/>
<path d="M437 12.5 V16 M437 14.5 H448" stroke="#222" stroke-width="1"/>
<circle cx="440" cy="14.5" r="1.3" fill="#e01010"/>
<!-- zoom out / window / in -->
<circle cx="458.5" cy="7.5" r="4.8" fill="#e8eef8" stroke="#b0b4bc" stroke-width="1.6"/>
<path d="M462 11 L466.5 15.5" stroke="#70a8e0" stroke-width="2.4"/>
<rect x="455.5" y="6.7" width="6" height="1.6" fill="#3a70d0"/>
<circle cx="478.5" cy="7.5" r="4.8" fill="#e8eef8" stroke="#b0b4bc" stroke-width="1.6"/>
<path d="M482 11 L486.5 15.5" stroke="#70a8e0" stroke-width="2.4"/>
<rect x="476" y="5.5" width="5" height="4" fill="none" stroke="#3a70d0" stroke-width="1"/>
<circle cx="498.5" cy="7.5" r="4.8" fill="#e8eef8" stroke="#b0b4bc" stroke-width="1.6"/>
<path d="M502 11 L506.5 15.5" stroke="#70a8e0" stroke-width="2.4"/>
<path d="M495.5 7.5 H501.5 M498.5 4.5 V10.5" stroke="#3a70d0" stroke-width="1.6"/>
<!-- fit -->
<path d="M513 4 H518 V8.5 H513 Z M520 4 H525 V8.5 H520 Z M513 10.5 H518 V15 H513 Z M520 10.5 H525 V15 H520 Z" fill="#2a70d0"/>
<path d="M514.5 5.5 L516.5 7 M523.5 5.5 L521.5 7 M514.5 13.5 L516.5 12 M523.5 13.5 L521.5 12" stroke="#a0c8f0" stroke-width=".8"/>
<!-- pan -->
<path d="M538 2 L541 5.5 H539 V8 H541.5 V6 L545 9.5 L541.5 13 V11 H539 V13.5 H541 L538 17 L535 13.5 H537 V11 H534.5 V13 L531 9.5 L534.5 6 V8 H537 V5.5 H535 Z" fill="#2a78d8"/>
<!-- rotate -->
<path d="M551 6 Q556 1 563 3 L565 7 Q559 5 554 9 Z" fill="#3a80d8"/>
<path d="M552 13 Q558 17 564 12 L562 10 Q558 13 554 11 Z" fill="#3a80d8"/>
<path d="M551 14 L564 3" stroke="#333" stroke-width=".8"/>
<!-- purple cube -->
<rect x="569.5" y="2.5" width="14" height="13" rx="3" fill="#ececf4" stroke="#d8d8e4" stroke-width="1"/>
<path d="M572 5.5 L576.5 4 L581 5.5 V12 L576.5 14 L572 12 Z" fill="#8a30e8"/>
<!-- gearbox -->
<rect x="589.5" y="2.5" width="13.5" height="13" fill="#e8e8f4" stroke="#3a48b0" stroke-width="1.4"/>
<circle cx="594" cy="8" r="2.6" fill="none" stroke="#222" stroke-width="1.1"/>
<circle cx="599" cy="10.5" r="2.2" fill="none" stroke="#222" stroke-width="1.1"/>
<path d="M591 14 L602 4" stroke="#444" stroke-width=".6"/>
<!-- green skip -->
<rect x="617" y="3" width="3" height="13" fill="#88d070"/>
<path d="M621 9.5 L627 3.5 V7 H632 V12 H627 V15.5 Z" fill="#50d040"/>
<rect x="636" y="3" width="3" height="13" fill="#88d070"/>
<!-- vertical toolbar -->
<rect x="60" y="26" width="2" height="77" fill="url(#grip)"/>
<path d="M66 33.5 H70" stroke="#111" stroke-width="1.8"/>
<circle cx="71.5" cy="33.5" r="2.6" fill="#e81818" stroke="#400" stroke-width=".5"/>
<path d="M74 40 L80 34" stroke="#c01818" stroke-width="3"/>
<path d="M79 33 L81 35" stroke="#e8c020" stroke-width="1.5"/>
<path d="M72.5 41.5 L74 38.5 L75.5 40 Z" fill="#222"/>
<path d="M69.5 48.5 V56 L76.5 55 Z" fill="none" stroke="#111" stroke-width="1.2"/>
<circle cx="69.5" cy="48.5" r="1.5" fill="#e01010"/>
<circle cx="69.5" cy="56" r="2" fill="#c86020" stroke="#111" stroke-width=".8"/>
<circle cx="76.5" cy="55" r="1.5" fill="#e81010"/>
<circle cx="73" cy="59.5" r="1.3" fill="#30c030"/>
<path d="M78 57 V62 M76 59.5 H81" stroke="#111" stroke-width="1.2"/>
<path d="M67 68 L71 66.5 L75 68 L79 66.5 V77 L75 78.5 L71 77 L67 78.5 Z" fill="#a0c8ec"/>
<path d="M71 66.5 V77 M75 68 V78.5" stroke="#80b0e0" stroke-width=".6"/>
<path d="M77 76 V81 M74.5 78.5 H79.5" stroke="#000" stroke-width="1.4"/>
<path d="M67.5 88 L73 85.5 L79 88 V95 L73 98 L67.5 95 Z" fill="#9a60e8"/>
<path d="M67.5 88 L73 90.5 L79 88 M73 90.5 V98" fill="none" stroke="#c8a0ff" stroke-width=".7"/>
<circle cx="77.5" cy="96" r="3.2" fill="#30b040"/>
<path d="M76 96 L77.2 97.2 L79.2 94.8" fill="none" stroke="#fff" stroke-width=".9"/>
</svg>

<svg class="a" style="left:0;top:455px" width="640" height="25" viewBox="0 455 640 25" shape-rendering="crispEdges">
<rect x="17" y="465.5" width="217" height="1.5" fill="#111"/>
<rect x="24.8" y="466" width="1.6" height="8" fill="#111"/>
<rect x="44.8" y="466" width="1.6" height="8" fill="#111"/>
<rect x="64.8" y="466" width="1.6" height="8" fill="#111"/>
<rect x="84.8" y="466" width="1.6" height="8" fill="#111"/>
<rect x="104.8" y="466" width="1.6" height="8" fill="#111"/>
<rect x="124.8" y="466" width="1.6" height="8" fill="#111"/>
<rect x="144.8" y="466" width="1.6" height="8" fill="#111"/>
<rect x="164.8" y="466" width="1.6" height="8" fill="#111"/>
<rect x="184.8" y="466" width="1.6" height="8" fill="#111"/>
<rect x="204.8" y="466" width="1.6" height="8" fill="#111"/>
<rect x="224.8" y="466" width="1.6" height="8" fill="#111"/>
<rect x="17.0" y="466.5" width="1" height="1.6" fill="#111"/>
<rect x="22.0" y="466.5" width="1" height="1.6" fill="#111"/>
<rect x="27.0" y="466.5" width="1" height="1.6" fill="#111"/>
<rect x="32.0" y="466.5" width="1" height="1.6" fill="#111"/>
<rect x="37.0" y="466.5" width="1" height="1.6" fill="#111"/>
<rect x="42.0" y="466.5" width="1" height="1.6" fill="#111"/>
<rect x="47.0" y="466.5" width="1" height="1.6" fill="#111"/>
<rect x="52.0" y="466.5" width="1" height="1.6" fill="#111"/>
<rect x="57.0" y="466.5" width="1" height="1.6" fill="#111"/>
<rect x="62.0" y="466.5" width="1" height="1.6" fill="#111"/>
<rect x="67.0" y="466.5" width="1" height="1.6" fill="#111"/>
<rect x="72.0" y="466.5" width="1" height="1.6" fill="#111"/>
<rect x="77.0" y="466.5" width="1" height="1.6" fill="#111"/>
<rect x="82.0" y="466.5" width="1" height="1.6" fill="#111"/>
<rect x="87.0" y="466.5" width="1" height="1.6" fill="#111"/>
<rect x="92.0" y="466.5" width="1" height="1.6" fill="#111"/>
<rect x="97.0" y="466.5" width="1" height="1.6" fill="#111"/>
<rect x="102.0" y="466.5" width="1" height="1.6" fill="#111"/>
<rect x="107.0" y="466.5" width="1" height="1.6" fill="#111"/>
<rect x="112.0" y="466.5" width="1" height="1.6" fill="#111"/>
<rect x="117.0" y="466.5" width="1" height="1.6" fill="#111"/>
<rect x="122.0" y="466.5" width="1" height="1.6" fill="#111"/>
<rect x="127.0" y="466.5" width="1" height="1.6" fill="#111"/>
<rect x="132.0" y="466.5" width="1" height="1.6" fill="#111"/>
<rect x="137.0" y="466.5" width="1" height="1.6" fill="#111"/>
<rect x="142.0" y="466.5" width="1" height="1.6" fill="#111"/>
<rect x="147.0" y="466.5" width="1" height="1.6" fill="#111"/>
<rect x="152.0" y="466.5" width="1" height="1.6" fill="#111"/>
<rect x="157.0" y="466.5" width="1" height="1.6" fill="#111"/>
<rect x="162.0" y="466.5" width="1" height="1.6" fill="#111"/>
<rect x="167.0" y="466.5" width="1" height="1.6" fill="#111"/>
<rect x="172.0" y="466.5" width="1" height="1.6" fill="#111"/>
<rect x="177.0" y="466.5" width="1" height="1.6" fill="#111"/>
<rect x="182.0" y="466.5" width="1" height="1.6" fill="#111"/>
<rect x="187.0" y="466.5" width="1" height="1.6" fill="#111"/>
<rect x="192.0" y="466.5" width="1" height="1.6" fill="#111"/>
<rect x="197.0" y="466.5" width="1" height="1.6" fill="#111"/>
<rect x="202.0" y="466.5" width="1" height="1.6" fill="#111"/>
<rect x="207.0" y="466.5" width="1" height="1.6" fill="#111"/>
<rect x="212.0" y="466.5" width="1" height="1.6" fill="#111"/>
<rect x="217.0" y="466.5" width="1" height="1.6" fill="#111"/>
<rect x="222.0" y="466.5" width="1" height="1.6" fill="#111"/>
<rect x="227.0" y="466.5" width="1" height="1.6" fill="#111"/>
<rect x="232.0" y="466.5" width="1" height="1.6" fill="#111"/>
<rect x="19.0" y="464" width="1" height="0.8" fill="#f4ec90"/>
<rect x="26.0" y="464" width="1" height="0.8" fill="#f4ec90"/>
<rect x="33.0" y="464" width="1" height="0.8" fill="#f4ec90"/>
<rect x="40.0" y="464" width="1" height="0.8" fill="#f4ec90"/>
<rect x="47.0" y="464" width="1" height="0.8" fill="#f4ec90"/>
<rect x="54.0" y="464" width="1" height="0.8" fill="#f4ec90"/>
<rect x="61.0" y="464" width="1" height="0.8" fill="#f4ec90"/>
<rect x="68.0" y="464" width="1" height="0.8" fill="#f4ec90"/>
<rect x="75.0" y="464" width="1" height="0.8" fill="#f4ec90"/>
<rect x="82.0" y="464" width="1" height="0.8" fill="#f4ec90"/>
<rect x="89.0" y="464" width="1" height="0.8" fill="#f4ec90"/>
<rect x="96.0" y="464" width="1" height="0.8" fill="#f4ec90"/>
<rect x="103.0" y="464" width="1" height="0.8" fill="#f4ec90"/>
<rect x="110.0" y="464" width="1" height="0.8" fill="#f4ec90"/>
<rect x="117.0" y="464" width="1" height="0.8" fill="#f4ec90"/>
<rect x="124.0" y="464" width="1" height="0.8" fill="#f4ec90"/>
<rect x="131.0" y="464" width="1" height="0.8" fill="#f4ec90"/>
<rect x="138.0" y="464" width="1" height="0.8" fill="#f4ec90"/>
<rect x="145.0" y="464" width="1" height="0.8" fill="#f4ec90"/>
<rect x="152.0" y="464" width="1" height="0.8" fill="#f4ec90"/>
<rect x="159.0" y="464" width="1" height="0.8" fill="#f4ec90"/>
<rect x="166.0" y="464" width="1" height="0.8" fill="#f4ec90"/>
<rect x="173.0" y="464" width="1" height="0.8" fill="#f4ec90"/>
<rect x="180.0" y="464" width="1" height="0.8" fill="#f4ec90"/>
<rect x="187.0" y="464" width="1" height="0.8" fill="#f4ec90"/>
<rect x="194.0" y="464" width="1" height="0.8" fill="#f4ec90"/>
<rect x="201.0" y="464" width="1" height="0.8" fill="#f4ec90"/>
<rect x="208.0" y="464" width="1" height="0.8" fill="#f4ec90"/>
<rect x="215.0" y="464" width="1" height="0.8" fill="#f4ec90"/>
<rect x="222.0" y="464" width="1" height="0.8" fill="#f4ec90"/>
<rect x="229.0" y="464" width="1" height="0.8" fill="#f4ec90"/>
<rect x="393" y="465.5" width="241" height="1.5" fill="#111"/>
<rect x="392.4" y="466" width="2.2" height="8" fill="#111"/>
<rect x="412.7" y="466" width="1.6" height="7" fill="#111"/>
<rect x="432.7" y="466" width="1.6" height="7" fill="#111"/>
<rect x="452.4" y="466" width="2.2" height="8" fill="#111"/>
<rect x="472.7" y="466" width="1.6" height="7" fill="#111"/>
<rect x="492.7" y="466" width="1.6" height="7" fill="#111"/>
<rect x="512.4" y="466" width="2.2" height="8" fill="#111"/>
<rect x="532.7" y="466" width="1.6" height="7" fill="#111"/>
<rect x="552.7" y="466" width="1.6" height="7" fill="#111"/>
<rect x="572.4" y="466" width="2.2" height="8" fill="#111"/>
<rect x="592.7" y="466" width="1.6" height="7" fill="#111"/>
<rect x="612.7" y="466" width="1.6" height="7" fill="#111"/>
<rect x="632.4" y="466" width="2.2" height="8" fill="#111"/>
<rect x="393.0" y="466.5" width="1" height="1.5" fill="#111"/>
<rect x="399.7" y="466.5" width="1" height="1.5" fill="#111"/>
<rect x="406.3" y="466.5" width="1" height="1.5" fill="#111"/>
<rect x="413.0" y="466.5" width="1" height="1.5" fill="#111"/>
<rect x="419.7" y="466.5" width="1" height="1.5" fill="#111"/>
<rect x="426.3" y="466.5" width="1" height="1.5" fill="#111"/>
<rect x="433.0" y="466.5" width="1" height="1.5" fill="#111"/>
<rect x="439.7" y="466.5" width="1" height="1.5" fill="#111"/>
<rect x="446.3" y="466.5" width="1" height="1.5" fill="#111"/>
<rect x="453.0" y="466.5" width="1" height="1.5" fill="#111"/>
<rect x="459.7" y="466.5" width="1" height="1.5" fill="#111"/>
<rect x="466.3" y="466.5" width="1" height="1.5" fill="#111"/>
<rect x="473.0" y="466.5" width="1" height="1.5" fill="#111"/>
<rect x="479.7" y="466.5" width="1" height="1.5" fill="#111"/>
<rect x="486.3" y="466.5" width="1" height="1.5" fill="#111"/>
<rect x="493.0" y="466.5" width="1" height="1.5" fill="#111"/>
<rect x="499.7" y="466.5" width="1" height="1.5" fill="#111"/>
<rect x="506.3" y="466.5" width="1" height="1.5" fill="#111"/>
<rect x="513.0" y="466.5" width="1" height="1.5" fill="#111"/>
<rect x="519.7" y="466.5" width="1" height="1.5" fill="#111"/>
<rect x="526.3" y="466.5" width="1" height="1.5" fill="#111"/>
<rect x="533.0" y="466.5" width="1" height="1.5" fill="#111"/>
<rect x="539.7" y="466.5" width="1" height="1.5" fill="#111"/>
<rect x="546.3" y="466.5" width="1" height="1.5" fill="#111"/>
<rect x="553.0" y="466.5" width="1" height="1.5" fill="#111"/>
<rect x="559.7" y="466.5" width="1" height="1.5" fill="#111"/>
<rect x="566.3" y="466.5" width="1" height="1.5" fill="#111"/>
<rect x="573.0" y="466.5" width="1" height="1.5" fill="#111"/>
<rect x="579.7" y="466.5" width="1" height="1.5" fill="#111"/>
<rect x="586.3" y="466.5" width="1" height="1.5" fill="#111"/>
<rect x="593.0" y="466.5" width="1" height="1.5" fill="#111"/>
<rect x="599.7" y="466.5" width="1" height="1.5" fill="#111"/>
<rect x="606.3" y="466.5" width="1" height="1.5" fill="#111"/>
<rect x="613.0" y="466.5" width="1" height="1.5" fill="#111"/>
<rect x="619.7" y="466.5" width="1" height="1.5" fill="#111"/>
<rect x="626.3" y="466.5" width="1" height="1.5" fill="#111"/>
<rect x="633.0" y="466.5" width="1" height="1.5" fill="#111"/>
<rect x="403.0" y="464.5" width="1.2" height="1.2" fill="#111"/>
<rect x="423.0" y="464.5" width="1.2" height="1.2" fill="#111"/>
<rect x="443.0" y="464.5" width="1.2" height="1.2" fill="#111"/>
<rect x="463.0" y="464.5" width="1.2" height="1.2" fill="#111"/>
<rect x="483.0" y="464.5" width="1.2" height="1.2" fill="#111"/>
<rect x="503.0" y="464.5" width="1.2" height="1.2" fill="#111"/>
<rect x="523.0" y="464.5" width="1.2" height="1.2" fill="#111"/>
<rect x="543.0" y="464.5" width="1.2" height="1.2" fill="#111"/>
<rect x="563.0" y="464.5" width="1.2" height="1.2" fill="#111"/>
<rect x="583.0" y="464.5" width="1.2" height="1.2" fill="#111"/>
<rect x="603.0" y="464.5" width="1.2" height="1.2" fill="#111"/>
<rect x="623.0" y="464.5" width="1.2" height="1.2" fill="#111"/>
</svg>
<svg class="a" style="left:0;top:476px" width="640" height="4" viewBox="0 476 640 4"><path d="M25.5 480 L29.2 476.3 L33 480 Z M391.8 480 L395.7 476.3 L399.5 480 Z" fill="#d81010"/></svg>
<svg class="a" style="left:0;top:458px" width="14" height="18" viewBox="0 458 14 18"><circle cx="5.8" cy="460.6" r="1.5" fill="#000"/><path d="M4 462.5 L7 462.5 L8.5 466 L10.5 467 L10 468 L7.8 467 L7.3 469 L9 473 L8 475 L6.3 470.5 L4.5 472.5 L3 475 L2 474 L4 470.5 L4.8 466 L3.5 467.5 L2.5 469.5 L1.8 469 L3 466 Z" fill="#000"/></svg>
<svg class="a" style="left:232px;top:458px" width="20" height="18" viewBox="232 458 20 18"><circle cx="244" cy="460.8" r="1.8" fill="#000"/><path d="M240 463 L245 462.5 L247 466.5 L249.5 467 L249 468.5 L246 468 L245.5 470 L248.5 472 L248 475 L246.5 474.5 L246.5 473 L243 471.5 L240 474 L235.5 475 L235 473.5 L239.5 471.5 L241.5 467.5 L239.5 467 L238 469 L236.8 468.5 L238.5 465 Z" fill="#000"/></svg>
<div class="lbl" style="left:373.5px;top:458.5px;width:40px;text-align:center;font-size:7px;font-weight:bold;color:#000;letter-spacing:-0.5px">0</div>
<div class="lbl" style="left:393.5px;top:458.5px;width:40px;text-align:center;font-size:7px;font-weight:bold;color:#000;letter-spacing:-0.5px">30</div>
<div class="lbl" style="left:413.5px;top:458.5px;width:40px;text-align:center;font-size:7px;font-weight:bold;color:#000;letter-spacing:-0.5px">60</div>
<div class="lbl" style="left:433.5px;top:458.5px;width:40px;text-align:center;font-size:7px;font-weight:bold;color:#000;letter-spacing:-0.5px">90</div>
<div class="lbl" style="left:453.5px;top:458.5px;width:40px;text-align:center;font-size:7px;font-weight:bold;color:#000;letter-spacing:-0.5px">120</div>
<div class="lbl" style="left:473.5px;top:458.5px;width:40px;text-align:center;font-size:7px;font-weight:bold;color:#000;letter-spacing:-0.5px">150</div>
<div class="lbl" style="left:493.5px;top:458.5px;width:40px;text-align:center;font-size:7px;font-weight:bold;color:#000;letter-spacing:-0.5px">180</div>
<div class="lbl" style="left:513.5px;top:458.5px;width:40px;text-align:center;font-size:7px;font-weight:bold;color:#000;letter-spacing:-0.5px">210</div>
<div class="lbl" style="left:533.5px;top:458.5px;width:40px;text-align:center;font-size:7px;font-weight:bold;color:#000;letter-spacing:-0.5px">240</div>
<div class="lbl" style="left:553.5px;top:458.5px;width:40px;text-align:center;font-size:7px;font-weight:bold;color:#000;letter-spacing:-0.5px">270</div>
<div class="lbl" style="left:573.5px;top:458.5px;width:40px;text-align:center;font-size:7px;font-weight:bold;color:#000;letter-spacing:-0.5px">300</div>
<div class="lbl" style="left:593.5px;top:458.5px;width:40px;text-align:center;font-size:7px;font-weight:bold;color:#000;letter-spacing:-0.5px">330</div>
<div class="lbl" style="left:613.5px;top:458.5px;width:40px;text-align:center;font-size:7px;font-weight:bold;color:#000;letter-spacing:-0.5px">360</div>
</body></html>
